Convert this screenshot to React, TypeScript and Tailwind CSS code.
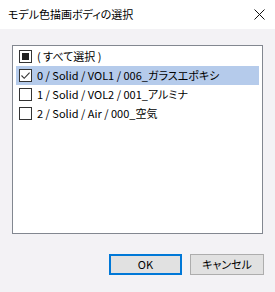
import { useState } from "react";

const font = {
  fontFamily: '"Noto Sans CJK JP", "Noto Sans", sans-serif',
};

type Item = { label: string; checked: boolean };

const Check = ({ state }: { state: "on" | "off" | "mixed" }) => {
  return (
    <div className="w-[13px] h-[13px] border border-[#333333] bg-white flex items-center justify-center shrink-0">
      {state === "mixed" && <div className="w-[7px] h-[7px] bg-[#222222]" />}
      {state === "on" && (
        <svg width="11" height="11" viewBox="0 0 11 11">
          <path d="M1.5 5.5 L4.2 8.3 L9.6 2.6" fill="none" stroke="#333" strokeWidth="1.1" />
        </svg>
      )}
    </div>
  );
};

export default function App() {
  const [items] = useState<Item[]>([
    { label: "0 / Solid / VOL1 / 006_ガラスエポキシ", checked: true },
    { label: "1 / Solid / VOL2 / 001_アルミナ", checked: false },
    { label: "2 / Solid / Air / 000_空気", checked: false },
  ]);
  const [selected] = useState(0);

  return (
    <div
      className="w-[275px] h-[292px] bg-[#f3f2f5] flex flex-col text-[11px] text-black [font-feature-settings:'palt']"
      style={font}
    >
      {/* title */}
      <div className="h-[29px] bg-white flex items-center justify-between pl-[8px] pr-[10px]">
        <span className="leading-none text-[11px]">モデル色描画ボディの選択</span>
        <svg width="11" height="11" viewBox="0 0 11 11">
          <path d="M0.5 0.5 L10.5 10.5 M10.5 0.5 L0.5 10.5" stroke="#111" strokeWidth="1" />
        </svg>
      </div>

      {/* list */}
      <div className="mt-[16px] mx-[12px] h-[189px] border border-[#828790] bg-white px-[3px] pt-[1px]">
        <div className="h-[19px] flex items-center gap-[5px] pl-[3px]">
          <Check state="mixed" />
          <span className="leading-none">( すべて選択 )</span>
        </div>
        {items.map((it, i) => (
          <div
            key={i}
            className={
              i === selected
                ? "h-[19px] flex items-center gap-[5px] pl-[3px] bg-[#b5cbeb]"
                : "h-[19px] flex items-center gap-[5px] pl-[3px]"
            }
          >
            <Check state={it.checked ? "on" : "off"} />
            <span className="leading-none whitespace-nowrap">{it.label}</span>
          </div>
        ))}
      </div>

      {/* buttons */}
      <div className="mt-[20px] flex justify-end gap-[8px] pr-[11px]">
        <button className="w-[73px] h-[21px] border-2 border-[#0078d7] bg-[#e1e1e1] leading-none">OK</button>
        <button className="w-[74px] h-[21px] border border-[#adadad] bg-[#e1e1e1] leading-none">キャンセル</button>
      </div>
    </div>
  );
}
